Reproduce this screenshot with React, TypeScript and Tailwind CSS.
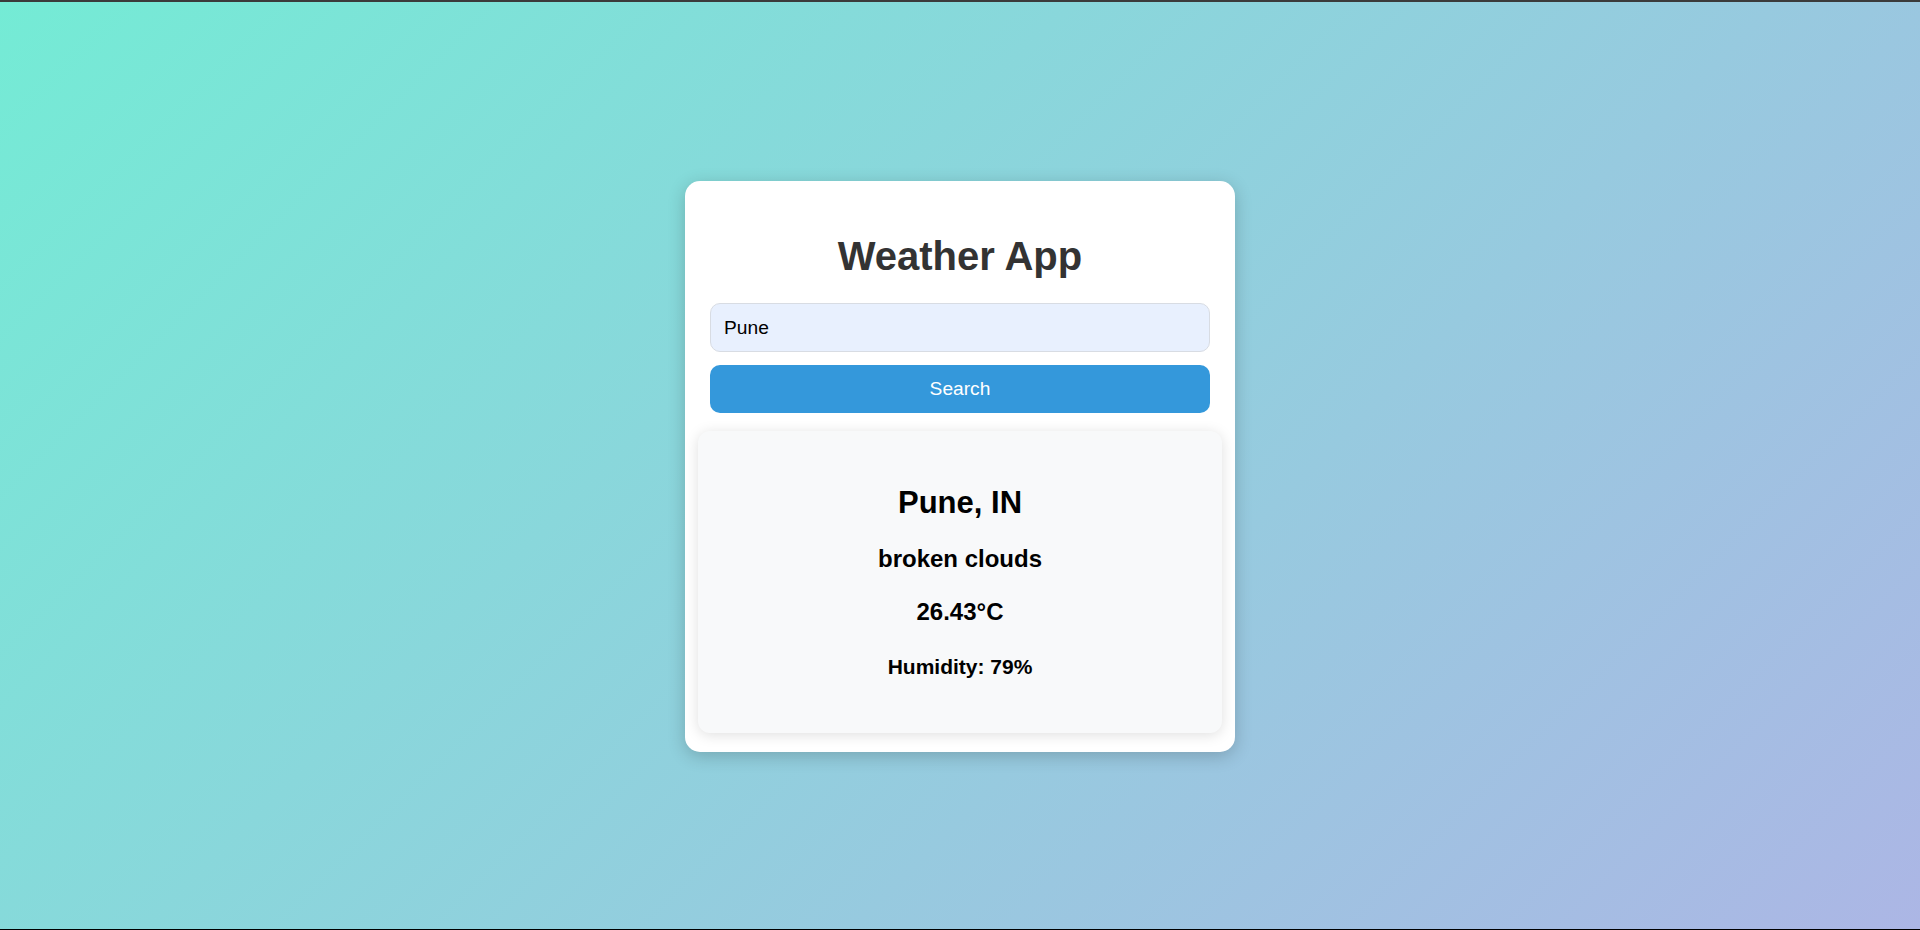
import { useState } from 'react';

export default function App() {
  const [city, setCity] = useState('Pune');

  const weather = {
    name: 'Pune',
    country: 'IN',
    description: 'broken clouds',
    temp: 26.43,
    humidity: 79,
  };

  return (
    <div className="h-[930px] w-full flex flex-col font-['Liberation_Sans',Arial,sans-serif]">
      <div className="h-[2px] bg-[#3b3b3b]" />
      <main className="flex-1 flex items-center justify-center pt-[2px] bg-[linear-gradient(135deg,#74ebd5,#acb6e5)]">
        <div className="w-[550px] bg-white rounded-[15px] px-[25px] pt-[25px] pb-[19px] shadow-[0_4px_18px_rgba(0,0,0,0.2)]">
          <h1 className="mt-[27px] mb-[24px] text-center text-[40px] leading-[46px] font-bold text-[#333]">
            Weather App
          </h1>

          <input
            type="text"
            value={city}
            onChange={(e) => setCity(e.target.value)}
            className="block w-full h-[49px] px-[13px] text-[1.2rem] text-black bg-[#e8f0fe] border border-[#d8dce3] rounded-[10px] outline-none"
          />

          <button className="block w-full h-[48px] mt-[13px] bg-[#3498db] text-white text-[1.2rem] rounded-[10px]">
            Search
          </button>

          {/* Result */}
          <div className="-mx-3 mt-[18px] py-[56px] bg-[#f8f9fa] rounded-[12px] text-center text-black shadow-[0_2px_14px_rgba(0,0,0,0.13)]">
            <h2 className="text-[31px] leading-none font-bold">
              {weather.name}, {weather.country}
            </h2>
            <p className="mt-[29px] text-[24px] leading-none font-bold">{weather.description}</p>
            <p className="mt-[29px] text-[24px] leading-none font-bold">{weather.temp}°C</p>
            <p className="mt-[32px] text-[21px] leading-none font-bold">Humidity: {weather.humidity}%</p>
          </div>
        </div>
      </main>
      <div className="h-px bg-black" />
    </div>
  );
}
